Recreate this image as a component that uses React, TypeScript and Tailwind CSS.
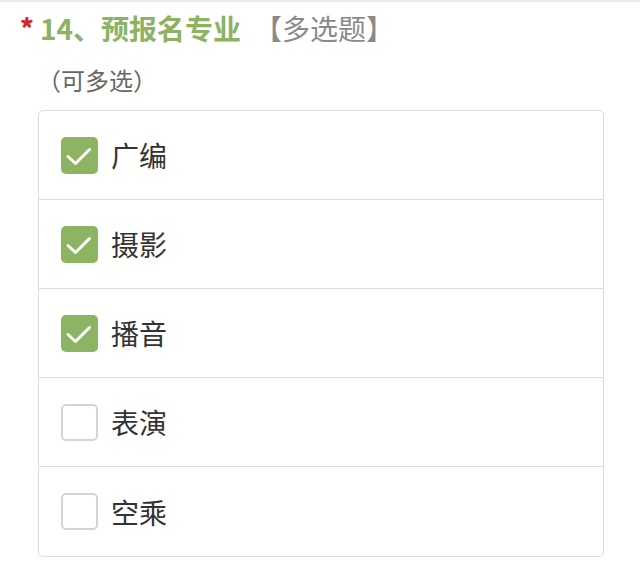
import React from "react";

const options = [
  { label: "广编", checked: true },
  { label: "摄影", checked: true },
  { label: "播音", checked: true },
  { label: "表演", checked: false },
  { label: "空乘", checked: false },
];

const font = { fontFamily: '"Noto Sans CJK SC", "Noto Sans", sans-serif' };

const CheckBox = ({ checked }: { checked: boolean }) =>
  checked ? (
    <span className="block h-[37px] w-[37px] rounded-[5px] bg-[#8db462]">
      <svg width="37" height="37" viewBox="0 0 37 37" fill="none">
        <path d="M7 19.5l7.5 7L28.5 12.5" stroke="#fff" strokeWidth="3" strokeLinecap="round" strokeLinejoin="round" />
      </svg>
    </span>
  ) : (
    <span className="h-[37px] w-[37px] rounded-[5px] border-2 border-[#d4d4d4] bg-white"></span>
  );

export default function App() {
  return (
    <div className="h-[587px] w-[640px] bg-white border-t-2 border-[#ececec]" style={font}>
      <div className="flex items-center pl-[20px] pt-[6px]">
        <span className="mt-[-2px] w-[20px] text-[26px] font-black leading-none text-[#d9262c]">*</span>
        <span className="text-[28px] font-bold leading-[40px] text-[#8cb263]">14、预报名专业</span>
        <span className="ml-[13px] text-[28px] leading-[40px] text-[#8a8a8a]">【多选题】</span>
      </div>
      <div className="pl-[37px] pt-[16px] text-[24px] leading-[32px] text-[#666]">（可多选）</div>
      <div className="ml-[38px] mt-[14px] w-[566px] rounded-[5px] border border-[#dcdcdc]">
        {options.map((o, i) => (
          <div
            key={o.label}
            className={`flex h-[89px] items-center gap-[13px] pl-[22px] ${i < options.length - 1 ? "border-b border-[#dcdcdc]" : ""}`}
          >
            <CheckBox checked={o.checked} />
            <span className="text-[28px] leading-none text-[#333]">{o.label}</span>
          </div>
        ))}
      </div>
    </div>
  );
}
